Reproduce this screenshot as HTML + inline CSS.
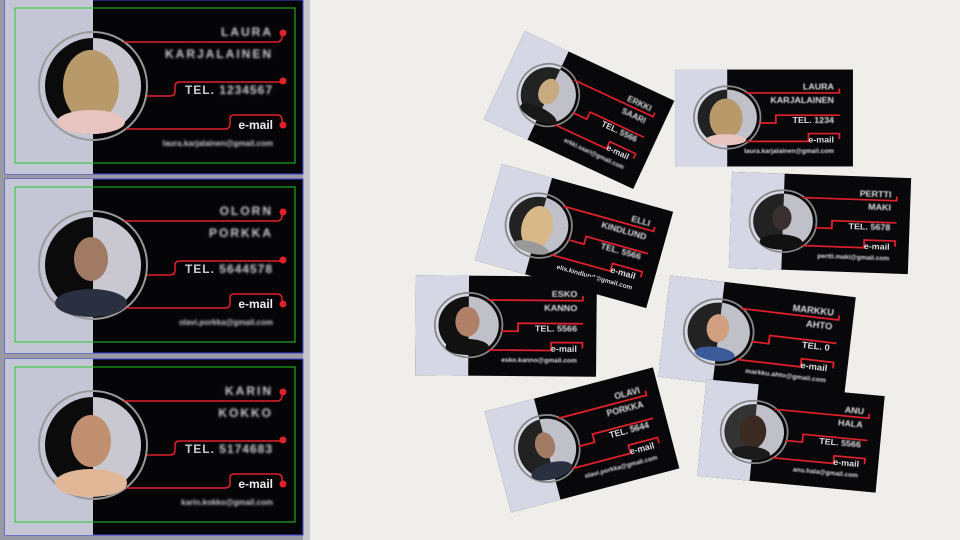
<!DOCTYPE html><html><head><meta charset="utf-8"><style>
html,body{margin:0;padding:0;width:960px;height:540px;overflow:hidden;background:#efeeeb}
svg{display:block}
text{font-family:"Liberation Sans",sans-serif;font-weight:bold}
</style></head><body>
<svg width="960" height="540" viewBox="0 0 960 540">
<defs><filter id="b"><feGaussianBlur stdDeviation="1"/></filter>
<filter id="sh"><feGaussianBlur stdDeviation="1.5"/></filter></defs>
<rect x="0" y="0" width="310" height="540" fill="#9a9aa4"/>
<rect x="303" y="0" width="7" height="540" fill="#c8c8cc"/>
<rect x="310" y="0" width="650" height="540" fill="#efeeeb"/>

<!-- LEFT CARD 1 -->
<g transform="translate(5,0)">
<rect width="298" height="174" fill="#050508" stroke="#4444dd"/><rect width="88" height="174" fill="#c5c6d5"/>
<rect x="10" y="8" width="280" height="155" fill="none" stroke="#22cc22"/>
<circle cx="88" cy="86" r="54" fill="none" stroke="#999" stroke-width="2"/>
<circle cx="88" cy="86" r="48" fill="#0b0b0b"/><path d="M88 38 A48 48 0 0 1 88 134Z" fill="#c9c8d0"/>
<ellipse cx="86" cy="86" rx="28" ry="36" fill="#b89a6a"/><ellipse cx="86" cy="122" rx="34" ry="12" fill="#e8c4c0"/>
<g fill="none" stroke="#e0202a" stroke-width="1.5"><path d="M119 42H272q5 0 5-6V34"/><path d="M142 96H165q5 0 5-5V86q0-4 5-4H278"/><path d="M121 129H220q5 0 5-5v-6q0-3 5-3H272q5 0 5 5v5"/></g>
<g fill="#e0202a"><circle cx="278" cy="33" r="3.5"/><circle cx="278" cy="81" r="3.5"/><circle cx="278" cy="125" r="3.5"/></g>
<g fill="#ccc" font-size="12" text-anchor="end"><text x="268" y="36" filter="url(#b)" letter-spacing="2">LAURA</text><text x="268" y="58" filter="url(#b)" letter-spacing="2">KARJALAINEN</text>
<text x="268" y="94" letter-spacing="1">TEL. <tspan filter="url(#b)">1234567</tspan></text><text x="268" y="129" font-size="12" fill="#eee">e-mail</text>
<text x="268" y="146" font-size="8" font-weight="normal" filter="url(#b)">laura.karjalainen@gmail.com</text></g>
</g>

<!-- LEFT CARD 2 -->
<g transform="translate(5,179)">
<rect width="298" height="174" fill="#050508" stroke="#4444dd"/><rect width="88" height="174" fill="#c5c6d5"/>
<rect x="10" y="8" width="280" height="155" fill="none" stroke="#22cc22"/>
<circle cx="88" cy="86" r="54" fill="none" stroke="#999" stroke-width="2"/>
<circle cx="88" cy="86" r="48" fill="#0b0b0b"/><path d="M88 38 A48 48 0 0 1 88 134Z" fill="#c9c8d0"/>
<ellipse cx="86" cy="80" rx="17" ry="22" fill="#a07a62"/><ellipse cx="86" cy="124" rx="36" ry="14" fill="#2a3040"/>
<g fill="none" stroke="#e0202a" stroke-width="1.5"><path d="M119 42H272q5 0 5-6V34"/><path d="M142 96H165q5 0 5-5V86q0-4 5-4H278"/><path d="M121 129H220q5 0 5-5v-6q0-3 5-3H272q5 0 5 5v5"/></g>
<g fill="#e0202a"><circle cx="278" cy="33" r="3.5"/><circle cx="278" cy="81" r="3.5"/><circle cx="278" cy="125" r="3.5"/></g>
<g fill="#ccc" font-size="12" text-anchor="end"><text x="268" y="36" filter="url(#b)" letter-spacing="2">OLORN</text><text x="268" y="58" filter="url(#b)" letter-spacing="2">PORKKA</text>
<text x="268" y="94" letter-spacing="1">TEL. <tspan filter="url(#b)">5644578</tspan></text><text x="268" y="129" font-size="12" fill="#eee">e-mail</text>
<text x="268" y="146" font-size="8" font-weight="normal" filter="url(#b)">olavi.porkka@gmail.com</text></g>
</g>

<!-- LEFT CARD 3 -->
<g transform="translate(5,359)">
<rect width="298" height="176" fill="#050508" stroke="#4444dd"/><rect width="88" height="176" fill="#c5c6d5"/>
<rect x="10" y="8" width="280" height="155" fill="none" stroke="#22cc22"/>
<circle cx="88" cy="86" r="54" fill="none" stroke="#999" stroke-width="2"/>
<circle cx="88" cy="86" r="48" fill="#0b0b0b"/><path d="M88 38 A48 48 0 0 1 88 134Z" fill="#c9c8d0"/>
<ellipse cx="86" cy="82" rx="20" ry="26" fill="#c09070"/><ellipse cx="86" cy="124" rx="36" ry="14" fill="#e0b898"/>
<g fill="none" stroke="#e0202a" stroke-width="1.5"><path d="M119 42H272q5 0 5-6V34"/><path d="M142 96H165q5 0 5-5V86q0-4 5-4H278"/><path d="M121 129H220q5 0 5-5v-6q0-3 5-3H272q5 0 5 5v5"/></g>
<g fill="#e0202a"><circle cx="278" cy="33" r="3.5"/><circle cx="278" cy="81" r="3.5"/><circle cx="278" cy="125" r="3.5"/></g>
<g fill="#ccc" font-size="12" text-anchor="end"><text x="268" y="36" filter="url(#b)" letter-spacing="2">KARIN</text><text x="268" y="58" filter="url(#b)" letter-spacing="2">KOKKO</text>
<text x="268" y="94" letter-spacing="1">TEL. <tspan filter="url(#b)">5174683</tspan></text><text x="268" y="129" font-size="12" fill="#eee">e-mail</text>
<text x="268" y="146" font-size="8" font-weight="normal" filter="url(#b)">karin.kokko@gmail.com</text></g>
</g>

<!-- RIGHT SIDE -->
<g transform="translate(579,110) rotate(25) scale(0.55,0.56) translate(-150,-87)">
<rect width="300" height="174" fill="#08080b"/><rect width="88" height="174" fill="#d6d7e4"/>
<circle cx="88" cy="86" r="56" fill="none" stroke="#888" stroke-width="3"/><circle cx="88" cy="86" r="50" fill="#222"/><path d="M88 36 A50 50 0 0 1 88 136Z" fill="#c0c0c8"/><ellipse cx="86" cy="80" rx="18" ry="24" fill="#c8aa80"/><ellipse cx="86" cy="124" rx="36" ry="12" fill="#181818"/>
<g fill="none" stroke="#e0202a" stroke-width="3"><path d="M119 42H277V34"/><path d="M142 96H170V82H278"/><path d="M121 129H225V115H277V125"/></g>
<g fill="#ddd" font-size="15" text-anchor="end"><text x="268" y="36" filter="url(#b)">ERKKI</text><text x="268" y="60" filter="url(#b)">SAARI</text><text x="268" y="96">TEL. <tspan filter="url(#b)">5566</tspan></text><text x="268" y="131">e-mail</text><text x="268" y="150" font-size="11" filter="url(#b)">erkki.saari@gmail.com</text></g></g>

<g transform="translate(764,118) scale(0.593,0.557) translate(-150,-87)">
<rect width="300" height="174" fill="#08080b"/><rect width="88" height="174" fill="#d6d7e4"/>
<circle cx="88" cy="86" r="56" fill="none" stroke="#888" stroke-width="3"/><circle cx="88" cy="86" r="50" fill="#222"/><path d="M88 36 A50 50 0 0 1 88 136Z" fill="#c0c0c8"/><ellipse cx="86" cy="88" rx="28" ry="36" fill="#b89a6a"/><ellipse cx="86" cy="126" rx="34" ry="10" fill="#e8c4c0"/>
<g fill="none" stroke="#e0202a" stroke-width="3"><path d="M119 42H277V34"/><path d="M142 96H170V82H278"/><path d="M121 129H225V115H277V125"/></g>
<g fill="#ddd" font-size="15" text-anchor="end"><text x="268" y="36" filter="url(#b)">LAURA</text><text x="268" y="60" filter="url(#b)">KARJALAINEN</text><text x="268" y="96">TEL. <tspan filter="url(#b)">1234</tspan></text><text x="268" y="131">e-mail</text><text x="268" y="150" font-size="11" filter="url(#b)">laura.karjalainen@gmail.com</text></g></g>

<g transform="translate(574,236) rotate(15.6) scale(0.593,0.575) translate(-150,-87)">
<rect width="300" height="174" fill="#08080b"/><rect width="88" height="174" fill="#d6d7e4"/>
<circle cx="88" cy="86" r="56" fill="none" stroke="#888" stroke-width="3"/><circle cx="88" cy="86" r="50" fill="#222"/><path d="M88 36 A50 50 0 0 1 88 136Z" fill="#c0c0c8"/><ellipse cx="86" cy="90" rx="26" ry="38" fill="#d8b888"/><ellipse cx="86" cy="126" rx="30" ry="10" fill="#999"/>
<g fill="none" stroke="#e0202a" stroke-width="3"><path d="M119 42H277V34"/><path d="M142 96H170V82H278"/><path d="M121 129H225V115H277V125"/></g>
<g fill="#ddd" font-size="15" text-anchor="end"><text x="268" y="36" filter="url(#b)">ELLI</text><text x="268" y="60" filter="url(#b)">KINDLUND</text><text x="268" y="96" filter="url(#b)">TEL. 5566</text><text x="268" y="131">e-mail</text><text x="268" y="150" font-size="11">elis.kindlund@gmail.com</text></g></g>

<g transform="translate(820,223) rotate(2) scale(0.597,0.552) translate(-150,-87)">
<rect width="300" height="174" fill="#08080b"/><rect width="88" height="174" fill="#d6d7e4"/>
<circle cx="88" cy="86" r="56" fill="none" stroke="#888" stroke-width="3"/><circle cx="88" cy="86" r="50" fill="#222"/><path d="M88 36 A50 50 0 0 1 88 136Z" fill="#c0c0c8"/><ellipse cx="86" cy="80" rx="16" ry="22" fill="#3a3030"/><ellipse cx="86" cy="124" rx="36" ry="14" fill="#111"/>
<g fill="none" stroke="#e0202a" stroke-width="3"><path d="M119 42H277V34"/><path d="M142 96H170V82H278"/><path d="M121 129H225V115H277V125"/></g>
<g fill="#ddd" font-size="15" text-anchor="end"><text x="268" y="36" filter="url(#b)">PERTTI</text><text x="268" y="60" filter="url(#b)">MAKI</text><text x="268" y="96">TEL. <tspan filter="url(#b)">5678</tspan></text><text x="268" y="131">e-mail</text><text x="268" y="150" font-size="11" filter="url(#b)">pertti.maki@gmail.com</text></g></g>

<g transform="translate(506,326) rotate(0.5) scale(0.603,0.575) translate(-150,-87)">
<rect width="300" height="174" fill="#08080b"/><rect width="88" height="174" fill="#d6d7e4"/>
<circle cx="88" cy="86" r="56" fill="none" stroke="#888" stroke-width="3"/><circle cx="88" cy="86" r="50" fill="#111"/><path d="M88 36 A50 50 0 0 1 88 136Z" fill="#c0c0c8"/><ellipse cx="86" cy="80" rx="20" ry="26" fill="#b08068"/><ellipse cx="86" cy="124" rx="36" ry="14" fill="#111"/>
<g fill="none" stroke="#e0202a" stroke-width="3"><path d="M119 42H277V34"/><path d="M142 96H170V82H278"/><path d="M121 129H225V115H277V125"/></g>
<g fill="#ddd" font-size="15" text-anchor="end"><text x="268" y="36" filter="url(#b)">ESKO</text><text x="268" y="60" filter="url(#b)">KANNO</text><text x="268" y="96">TEL. <tspan filter="url(#b)">5566</tspan></text><text x="268" y="131">e-mail</text><text x="268" y="150" font-size="11" filter="url(#b)">esko.kanno@gmail.com</text></g></g>

<g transform="translate(757,337) rotate(6.7) scale(0.623,0.586) translate(-150,-87)">
<rect width="300" height="174" fill="#08080b"/><rect width="88" height="174" fill="#d6d7e4"/>
<circle cx="88" cy="86" r="56" fill="none" stroke="#888" stroke-width="3"/><circle cx="88" cy="86" r="50" fill="#222"/><path d="M88 36 A50 50 0 0 1 88 136Z" fill="#c0c0c8"/><ellipse cx="86" cy="80" rx="18" ry="24" fill="#d0a080"/><ellipse cx="86" cy="124" rx="32" ry="12" fill="#3a5a9a"/>
<g fill="none" stroke="#e0202a" stroke-width="3"><path d="M119 42H277V34"/><path d="M142 96H170V82H278"/><path d="M121 129H225V115H277V125"/></g>
<g fill="#ddd" font-size="15" text-anchor="end"><text x="268" y="36" filter="url(#b)">MARKKU</text><text x="268" y="60" filter="url(#b)">AHTO</text><text x="268" y="96">TEL.       0</text><text x="268" y="131">e-mail</text><text x="268" y="150" font-size="11" filter="url(#b)">markku.ahto@gmail.com</text></g></g>

<g transform="translate(582,440) rotate(-14.7) scale(0.58,0.6) translate(-150,-87)">
<rect width="300" height="174" fill="#08080b"/><rect width="88" height="174" fill="#d6d7e4"/>
<circle cx="88" cy="86" r="56" fill="none" stroke="#888" stroke-width="3"/><circle cx="88" cy="86" r="50" fill="#222"/><path d="M88 36 A50 50 0 0 1 88 136Z" fill="#c0c0c8"/><ellipse cx="86" cy="80" rx="17" ry="22" fill="#a07a62"/><ellipse cx="86" cy="124" rx="36" ry="14" fill="#2a3040"/>
<g fill="none" stroke="#e0202a" stroke-width="3"><path d="M119 42H277V34"/><path d="M142 96H170V82H278"/><path d="M121 129H225V115H277V125"/></g>
<g fill="#ddd" font-size="15" text-anchor="end"><text x="268" y="36" filter="url(#b)">OLAVI</text><text x="268" y="60" filter="url(#b)">PORKKA</text><text x="268" y="96">TEL. <tspan filter="url(#b)">5644</tspan></text><text x="268" y="131">e-mail</text><text x="268" y="150" font-size="11" filter="url(#b)">olavi.porkka@gmail.com</text></g></g>

<g transform="translate(791,436) rotate(5.4) scale(0.597,0.557) translate(-150,-87)">
<rect width="300" height="174" fill="#08080b"/><rect width="88" height="174" fill="#d6d7e4"/>
<circle cx="88" cy="86" r="56" fill="none" stroke="#888" stroke-width="3"/><circle cx="88" cy="86" r="50" fill="#333"/><path d="M88 36 A50 50 0 0 1 88 136Z" fill="#c0c0c8"/><ellipse cx="86" cy="86" rx="22" ry="30" fill="#3a2a22"/><ellipse cx="86" cy="124" rx="32" ry="12" fill="#1a1a1a"/>
<g fill="none" stroke="#e0202a" stroke-width="3"><path d="M119 42H277V34"/><path d="M142 96H170V82H278"/><path d="M121 129H225V115H277V125"/></g>
<g fill="#ddd" font-size="15" text-anchor="end"><text x="268" y="36" filter="url(#b)">ANU</text><text x="268" y="60" filter="url(#b)">HALA</text><text x="268" y="96">TEL. <tspan filter="url(#b)">5566</tspan></text><text x="268" y="131">e-mail</text><text x="268" y="150" font-size="11" filter="url(#b)">anu.hala@gmail.com</text></g></g>
</svg>
</body></html>
